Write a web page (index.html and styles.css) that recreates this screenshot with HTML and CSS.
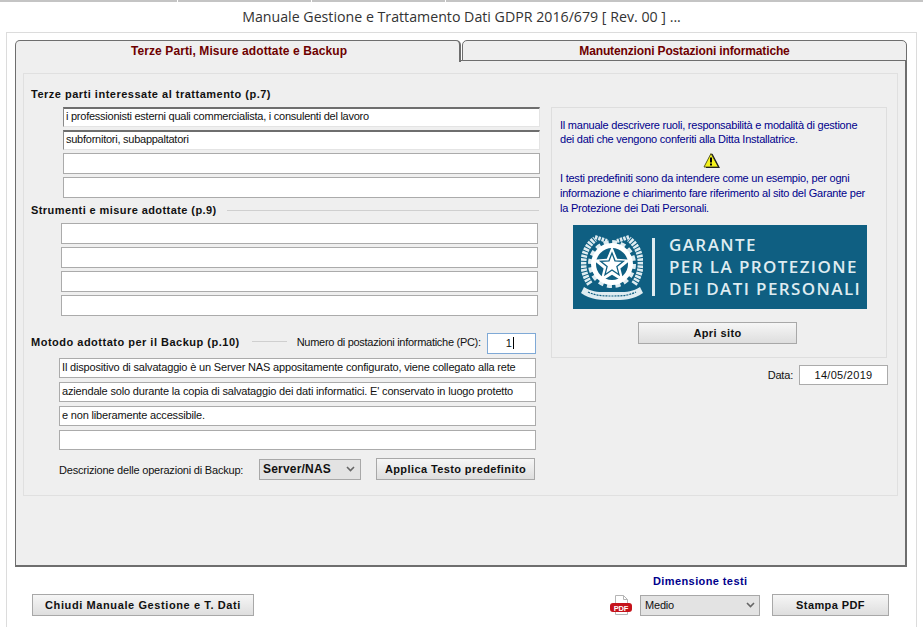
FILE: index.html
```html
<!DOCTYPE html>
<html lang="en">
  <head>
    <meta charset="UTF-8" />
    <meta name="viewport" content="width=device-width, initial-scale=1.0" />
    <title>Manuale Gestione e Trattamento Dati</title>
    <link rel="stylesheet" href="styles.css">
  </head>
  <body>
    <div class="topstrip"><i></i><i></i><i></i><i></i></div>
    <h1 class="title">Manuale Gestione e Trattamento Dati GDPR 2016/679 [ Rev. 00 ] ...</h1>
    <main class="frame">
      <div class="tabs">
        <div class="tab tab-on">Terze Parti, Misure adottate e Backup</div>
        <div class="tab">Manutenzioni Postazioni informatiche</div>
      </div>
      <div class="pane">
        <div class="group">
          <section class="left">
            <h2 class="head head-first">Terze parti interessate al trattamento (p.7)</h2>
            <div class="stack stack-a">
              <div class="field field-dark">i professionisti esterni quali commercialista, i consulenti del lavoro</div>
              <div class="field field-dark">subfornitori, subappaltatori</div>
              <div class="field"></div>
              <div class="field"></div>
            </div>
            <h2 class="head head-line">Strumenti e misure adottate (p.9)</h2>
            <div class="stack stack-b">
              <div class="field"></div>
              <div class="field"></div>
              <div class="field"></div>
              <div class="field"></div>
            </div>
            <div class="backup-row">
              <h2 class="head">Motodo adottato per il Backup (p.10)</h2>
              <span class="rule"></span>
              <span class="label">Numero di postazioni informatiche (PC):</span>
              <div class="field field-focus"><span class="caret">1</span></div>
            </div>
            <div class="stack stack-c">
              <div class="field">Il dispositivo di salvataggio è un Server NAS appositamente configurato, viene collegato alla rete</div>
              <div class="field">aziendale solo durante la copia di salvataggio dei dati informatici. E' conservato in luogo protetto</div>
              <div class="field">e non liberamente accessibile.</div>
              <div class="field"></div>
            </div>
            <div class="action-row">
              <span class="label">Descrizione delle operazioni di Backup:</span>
              <div class="select select-bold">Server/NAS
                <svg width="9" height="6" viewBox="0 0 9 6"><path d="M1 1l3.5 3.5L8 1" fill="none" stroke="#666" stroke-width="1.6"/></svg>
              </div>
              <button class="btn btn-apply">Applica Testo predefinito</button>
            </div>
          </section>

          <section class="right">
            <div class="info">
              <p class="info-text">Il manuale descrivere ruoli, responsabilità e modalità di gestione<br>dei dati che vengono conferiti alla Ditta Installatrice.</p>
              <svg class="warn" width="18" height="17" viewBox="0 0 18 17">
                <path d="M9 1.5L16.5 15H2z" fill="#f4f21c" stroke="#5c5c20" stroke-width="1"/>
                <path d="M10 2l7 13.5H4" fill="none" stroke="#222" stroke-width="1.2"/>
                <path d="M9 5.5v5" stroke="#000" stroke-width="2"/>
                <rect x="8" y="11.5" width="2" height="2" fill="#000"/>
              </svg>
              <p class="info-text info-text-b">I testi predefiniti sono da intendere come un esempio, per ogni<br>informazione e chiarimento fare riferimento al sito del Garante per<br>la Protezione dei Dati Personali.</p>
              <div class="banner">
                <svg class="emblem" width="62" height="70" viewBox="0 0 62 70">
                  <g fill="none" stroke="#dfecf1">
                    <path d="M9 52C-1 38 0 18 14 7" stroke-width="6" stroke-dasharray="2.5 1"/>
                    <path d="M53 52C63 38 62 18 48 7" stroke-width="6" stroke-dasharray="2.5 1"/>
                    <path d="M14 5l12 4M48 5L36 9" stroke-width="4" stroke-dasharray="2.5 1"/>
                    <circle cx="31" cy="32" r="22" stroke-width="4" stroke-dasharray="5 3.600"/>
                  </g>
                  <circle cx="31" cy="32" r="21" fill="#fff"/>
                  <circle cx="31" cy="32" r="16" fill="#0f5f82"/>
                  <path d="M31 14l5.200 12.800 13.800.9-10.600 8.900 3.400 13.400L31 42.700l-11.800 7.300 3.400-13.400-10.600-8.900 13.800-.9z" fill="#fff"/>
                  <path d="M31 21l3 7.800 8.400.5-6.500 5.300 2.100 8.100L31 38l-7 4.700 2.100-8.100-6.500-5.300 8.400-.5z" fill="#fff" stroke="#0f5f82" stroke-width="1.300"/>
                  <path d="M3 55c9 6 18 5 28 5s19 1 28-5l3 6c-9 7-21 7-31 7s-22 0-31-7z" fill="#dfecf1"/>
                  <path d="M7 60c8 4 16 4 24 4s16 0 24-4" fill="none" stroke="#0f5f82" stroke-width="1.200" stroke-dasharray="2 1"/>
                </svg>
                <span class="banner-bar"></span>
                <div class="banner-text">GARANTE<br>PER LA PROTEZIONE<br>DEI DATI PERSONALI</div>
              </div>
              <button class="btn btn-site">Apri sito</button>
            </div>
            <div class="date-row">
              <span class="label">Data:</span>
              <div class="field field-date">14/05/2019</div>
            </div>
          </section>
        </div>
      </div>
      <footer class="bottom">
        <button class="btn btn-close">Chiudi Manuale Gestione e T. Dati</button>
        <div class="bottom-right">
          <div class="size-label">Dimensione testi</div>
          <div class="size-row">
            <svg class="pdf" width="24" height="21" viewBox="0 0 24 21">
              <path d="M5.500 .5h8l4 4v15h-12z" fill="#fff" stroke="#b5b5b5"/>
              <path d="M13.500 .5v4h4" fill="none" stroke="#b5b5b5"/>
              <rect x="0" y="8" width="22" height="9" rx="3" fill="#c5131b"/>
              <text x="11" y="15.500" class="pdf-text" text-anchor="middle">PDF</text>
            </svg>
            <div class="select">Medio
              <svg width="9" height="6" viewBox="0 0 9 6"><path d="M1 1l3.500 3.500L8 1" fill="none" stroke="#666" stroke-width="1.600"/></svg>
            </div>
            <button class="btn btn-print">Stampa PDF</button>
          </div>
        </div>
      </footer>
    </main>
  </body>
</html>
```

FILE: styles.css
```css
* {
  box-sizing: border-box;
}

html,
body {
  margin: 0;
  height: 627px;
  overflow: hidden;
  background: #fff;
  font-family: "Liberation Sans", Arial, sans-serif;
  font-size: 11px;
  letter-spacing: -0.2px;
  color: #111;
}

.topstrip {
  display: flex;
  gap: 1px;
  height: 2px;
}

.topstrip i {
  flex: 0 0 176px;
  background: #c4c4c4;
}

.topstrip i:first-child {
  flex-basis: 177px;
}

.topstrip i:nth-child(2),
.topstrip i:nth-child(3) {
  flex-basis: 133px;
}

.topstrip i:last-child {
  flex: 1;
}

.title {
  margin: 0;
  height: 30px;
  font-family: "Open Sans", sans-serif;
  font-size: 14.2px;
  font-weight: 400;
  line-height: 30px;
  letter-spacing: 0;
  text-align: center;
  color: #333;
}

.frame {
  margin-left: 6px;
  width: 911px;
  height: 620px;
  padding: 7px 0 0 8px;
  border: 1px solid #dcdcdc;
}

.tabs {
  display: flex;
  width: 892px;
  height: 21px;
  position: relative;
  z-index: 1;
  margin-bottom: -1px;
}

.tab {
  flex: 1;
  margin-left: 1px;
  padding-top: 3px;
  border: 1px solid #6e6e6e;
  border-radius: 5px 5px 0 0;
  background: #efefef;
  font-size: 12px;
  font-weight: bold;
  letter-spacing: -0.14px;
  text-align: center;
  color: #6d0000;
}

.tab-on {
  margin-left: 0;
  flex: 0 0 446px;
  height: 22px;
  padding-left: 3px;
  border-bottom: 0;
  border-right-width: 2px;
  letter-spacing: 0.1px;
}

.pane {
  width: 892px;
  height: 507px;
  padding: 12px 7px 0 7px;
  border: solid #6e6e6e;
  border-width: 1px 2px 2px 1px;
  background: #efefef;
}

.group {
  display: flex;
  gap: 10px;
  height: 423px;
  border: 1px solid #e0e0e0;
}

.left {
  flex: 0 0 517px;
  min-width: 0;
}

.right {
  flex: 0 0 337px;
  min-width: 0;
  padding-top: 33px;
}

.head {
  margin: 0;
  height: 16px;
  font-size: 11px;
  font-weight: bold;
  line-height: 16px;
  letter-spacing: 0.5px;
  white-space: nowrap;
}

.head-first {
  margin: 12px 0 0 7px;
}

.head-line {
  display: flex;
  align-items: center;
  gap: 10px;
  margin: 4px 2px 0 7px;
  letter-spacing: 0.42px;
}

.head-line::after {
  content: "";
  flex: 1;
  height: 1px;
  background: #cfcfcf;
}

.stack {
  display: flex;
  flex-direction: column;
  gap: 3px;
  width: 477px;
}

.stack-a {
  margin: 5px 0 0 39px;
  letter-spacing: -0.25px;
}

.stack-b {
  margin: 5px 0 0 37px;
}

.stack-c {
  gap: 4px;
  margin: 4px 0 0 35px;
  letter-spacing: -0.17px;
}

.stack-c .field {
  height: 20px;
  line-height: 17px;
}

.field {
  height: 21px;
  padding: 0 2px;
  border: 1px solid #ababab;
  background: #fff;
  line-height: 18px;
  white-space: nowrap;
  overflow: hidden;
}

.field-dark {
  height: 20px;
  border-top: 2px solid #6e6e6e;
  border-left: 1px solid #8a8a8a;
  border-right-color: #e4e4e4;
  border-bottom-color: #e4e4e4;
  line-height: 14px;
}

.field-focus {
  flex: 0 0 49px;
  margin-left: 6px;
  padding-right: 21px;
  border-color: #7fa9d6;
  text-align: right;
}

.caret {
  padding-right: 1px;
  border-right: 1px solid #000;
}

.field-date {
  width: 89px;
  height: 20px;
  letter-spacing: 0.3px;
  text-align: center;
}

.backup-row {
  display: flex;
  align-items: center;
  height: 21px;
  margin: 17px 0 0 7px;
}

.backup-row .head {
  margin-top: -4px;
}

.rule {
  flex: 0 0 35px;
  height: 1px;
  margin: -4px 0 0 12px;
  background: #cfcfcf;
}

.backup-row .label {
  margin: -4px 0 0 10px;
  letter-spacing: -0.28px;
}

.label {
  white-space: nowrap;
}

.action-row {
  display: flex;
  align-items: center;
  height: 22px;
  margin: 8px 0 0 35px;
}

.action-row .label {
  flex: 0 0 200px;
  margin-top: 2px;
}

.select {
  display: flex;
  align-items: center;
  justify-content: space-between;
  width: 120px;
  height: 21px;
  padding: 0 4px;
  border: 1px solid #a8a8a8;
  background: #e3e3e3;
}

.select-bold {
  width: 102px;
  margin-right: 15px;
  padding: 0 5px 0 3px;
  font-size: 12px;
  font-weight: bold;
  letter-spacing: 0.2px;
}

.btn {
  height: 22px;
  padding: 0;
  border: 1px solid #a8a8a8;
  background: linear-gradient(#f6f6f6, #dedede);
  font: bold 11px "Liberation Sans", Arial, sans-serif;
  letter-spacing: 0.4px;
  color: #111;
}

.btn-apply {
  width: 159px;
}

.info {
  width: 336px;
  height: 251px;
  padding: 10px 0 0 8px;
  border: 1px solid #dedede;
}

.info-text {
  margin: 0;
  line-height: 14px;
  letter-spacing: -0.23px;
  color: #00008c;
}

.info-text-b {
  line-height: 15px;
}

.warn {
  display: block;
  margin: 6px 0 2px 142px;
}

.banner {
  display: flex;
  align-items: center;
  width: 294px;
  height: 84px;
  margin: 9px 0 0 13px;
  padding-left: 8px;
  background: #0f5f82;
}

.emblem {
  flex: none;
}

.banner-bar {
  flex: 0 0 3px;
  height: 58px;
  margin: 0 14px 0 9px;
  background: #dfecf1;
}

.banner-text {
  font-family: "Open Sans", sans-serif;
  font-size: 17px;
  font-weight: 600;
  line-height: 22px;
  letter-spacing: 1.4px;
  white-space: nowrap;
  color: #dfecf1;
}

.btn-site {
  display: block;
  width: 159px;
  margin: 13px 0 0 78px;
}

.date-row {
  display: flex;
  align-items: center;
  justify-content: flex-end;
  gap: 6px;
  margin-top: 7px;
}

.bottom {
  display: flex;
  justify-content: space-between;
  width: 857px;
  margin: 8px 0 0 17px;
}

.btn-close {
  width: 222px;
  margin-top: 19px;
  letter-spacing: 0.6px;
}

.bottom-right {
  width: 279px;
}

.size-label {
  height: 14px;
  margin-left: 43px;
  font-size: 11px;
  font-weight: bold;
  letter-spacing: 0.4px;
  color: #00008c;
}

.size-row {
  display: flex;
  align-items: center;
  margin-top: 5px;
}

.pdf {
  flex: none;
  margin-right: 6px;
}

.pdf-text {
  font: bold 7.5px "Liberation Sans", Arial, sans-serif;
  fill: #fff;
}

.btn-print {
  width: 117px;
  margin-left: 12px;
}
```
